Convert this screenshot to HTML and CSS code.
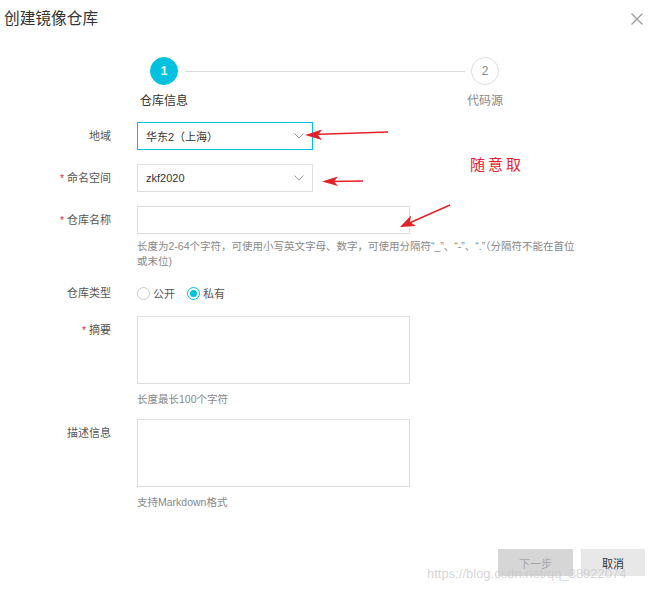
FILE: index.html
```html
<!DOCTYPE html>
<html>
<head>
    <title>创建镜像仓库</title>
    <meta charset="utf-8">
    <link rel="stylesheet" href="styles.css">
</head>
<body>

    <div class="dialog">
        <div class="dialog-header">
            <h1 class="dialog-title">创建镜像仓库</h1>
            <svg class="close" width="12" height="12" viewBox="0 0 12 12">
                <path d="M0.5 0.5 L11.5 11.5 M11.5 0.5 L0.5 11.5" stroke="#999" stroke-width="1.2" fill="none"/>
            </svg>
        </div>

        <!-- Wizard steps -->
        <div class="steps">
            <div class="step active">
                <div class="step-num">1</div>
                <div class="step-label">仓库信息</div>
            </div>
            <div class="step-line"></div>
            <div class="step">
                <div class="step-num">2</div>
                <div class="step-label">代码源</div>
            </div>
        </div>

        <div class="form">
            <div class="form-item">
                <label class="form-label">地域</label>
                <div class="form-control">
                    <div class="select focused">
                        <span>华东2（上海）</span>
                        <svg class="caret" width="10" height="6" viewBox="0 0 10 6"><path d="M0.5 0.5 L5 5 L9.5 0.5" stroke="#999" fill="none"/></svg>
                    </div>
                </div>
            </div>
            <div class="form-item">
                <label class="form-label"><i class="req">*</i>命名空间</label>
                <div class="form-control">
                    <div class="select">
                        <span>zkf2020</span>
                        <svg class="caret" width="10" height="6" viewBox="0 0 10 6"><path d="M0.5 0.5 L5 5 L9.5 0.5" stroke="#999" fill="none"/></svg>
                    </div>
                </div>
            </div>
            <div class="form-item name-item">
                <label class="form-label"><i class="req">*</i>仓库名称</label>
                <div class="form-control">
                    <div class="input"></div>
                    <p class="help">长度为2-64个字符，可使用小写英文字母、数字，可使用分隔符“_”、“-”、“.”（分隔符不能在首位或末位)</p>
                </div>
            </div>
            <div class="form-item radio-item">
                <label class="form-label">仓库类型</label>
                <div class="form-control radios">
                    <span class="radio"><i class="radio-dot"></i>公开</span>
                    <span class="radio checked"><i class="radio-dot"></i>私有</span>
                </div>
            </div>
            <div class="form-item area-item">
                <label class="form-label"><i class="req">*</i>摘要</label>
                <div class="form-control">
                    <div class="textarea"></div>
                    <p class="help">长度最长100个字符</p>
                </div>
            </div>
            <div class="form-item area-item">
                <label class="form-label">描述信息</label>
                <div class="form-control">
                    <div class="textarea"></div>
                    <p class="help">支持Markdown格式</p>
                </div>
            </div>
        </div>

        <div class="dialog-footer">
            <button class="btn disabled">下一步</button>
            <button class="btn">取消</button>
        </div>

        <!-- Annotations drawn on the screenshot -->
        <svg class="marks" width="650" height="591" viewBox="0 0 650 591">
            <g stroke="#e3212a" stroke-width="1.4" fill="#e3212a">
                <line x1="388" y1="132" x2="312" y2="134.5"/>
                <polygon points="305,135 322,129.5 318,135 322,140" stroke="none"/>
                <line x1="363" y1="181" x2="330" y2="181.5"/>
                <polygon points="322,181.5 338,176.5 334,181.5 338,186" stroke="none"/>
                <line x1="450" y1="205" x2="407" y2="224"/>
                <polygon points="400,227 411,215.5 410,222 416,226" stroke="none"/>
            </g>
        </svg>
        <div class="note">随意取</div>
        <div class="watermark">https://blog.csdn.net/qq_38922074</div>
    </div>

</body>
</html>
```

FILE: styles.css
```css
/* Page */
body, h1, p {
    margin: 0;
    padding: 0;
}

body {
    font-family: "Liberation Sans", "Noto Sans CJK SC", sans-serif;
    font-size: 11px;
    color: #333;
    background: #fff;
}

.dialog {
    position: relative;
    width: 650px;
    height: 591px;
    overflow: hidden;
    display: flex;
    flex-direction: column;
}

/* Header */
.dialog-header {
    display: flex;
    justify-content: space-between;
    align-items: flex-start;
    height: 40px;
    flex: none;
    padding: 8px 7px 0 4px;
    box-sizing: border-box;
}

.dialog-title {
    font-size: 15.7px;
    font-weight: normal;
    line-height: 22px;
    color: #333;
}

.close {
    margin-top: 5px;
}

/* Steps */
.steps {
    display: flex;
    align-items: flex-start;
    width: 381px;
    margin: 17px 0 0 134px;
}

.step {
    width: 60px;
    display: flex;
    flex-direction: column;
    align-items: center;
    position: relative;
    z-index: 1;
}

.step-num {
    width: 26px;
    height: 26px;
    border: 1px solid #ddd;
    border-radius: 50%;
    background: #fff;
    color: #888;
    font-size: 12px;
    line-height: 26px;
    text-align: center;
}

.step.active .step-num {
    background: #00c1de;
    border-color: #00c1de;
    color: #fff;
    font-weight: bold;
}

.step-label {
    margin-top: 8px;
    height: 16px;
    line-height: 16px;
    font-size: 12px;
    color: #888;
    white-space: nowrap;
}

.step.active .step-label {
    color: #333;
}

.step-line {
    flex: 1;
    height: 1px;
    background: #dcdcdc;
    margin: 14px -10px 0 -9px;
}

/* Form */
.form {
    margin-top: 13px;
}

.form-item {
    display: grid;
    grid-template-columns: 111px 1fr;
    column-gap: 26px;
    margin-bottom: 14px;
}

.form-label {
    text-align: right;
    height: 28px;
    line-height: 28px;
    color: #555;
    white-space: nowrap;
}

.req {
    font-style: normal;
    color: #e3212a;
    margin-right: 3px;
    font-size: 10px;
}

.select {
    width: 176px;
    height: 28px;
    box-sizing: border-box;
    border: 1px solid #ddd;
    display: flex;
    align-items: center;
    justify-content: space-between;
    padding: 0 8px 0 8px;
    color: #333;
}

.select.focused {
    border-color: #00c1de;
}

.input {
    width: 273px;
    height: 28px;
    box-sizing: border-box;
    border: 1px solid #ddd;
}

.help {
    width: 444px;
    margin-top: 5px;
    font-size: 10.5px;
    line-height: 15px;
    color: #888;
}

.name-item {
    margin-bottom: 10px;
}

/* Radios */
.radio-item {
    margin-bottom: 9px;
}

.radios {
    display: flex;
    align-items: center;
    height: 28px;
    gap: 12px;
    color: #555;
}

.radio {
    display: flex;
    align-items: center;
}

.radio-dot {
    width: 13px;
    height: 13px;
    box-sizing: border-box;
    border: 1px solid #ccc;
    border-radius: 50%;
    margin-right: 3px;
    position: relative;
}

.radio.checked .radio-dot {
    border-color: #00c1de;
}

.radio.checked .radio-dot::after {
    content: "";
    position: absolute;
    left: 2px;
    top: 2px;
    width: 7px;
    height: 7px;
    border-radius: 50%;
    background: #00c1de;
}

/* Text areas */
.textarea {
    width: 273px;
    height: 68px;
    box-sizing: border-box;
    border: 1px solid #ddd;
}

.area-item .help {
    margin-top: 8px;
}

.area-item {
    margin-bottom: 12px;
}

/* Footer */
.dialog-footer {
    display: flex;
    justify-content: flex-end;
    gap: 8px;
    margin-top: auto;
    padding: 0 5px 15px 0;
}

.btn {
    height: 27px;
    border: none;
    background: #e8e8e8;
    color: #333;
    font-family: inherit;
    font-size: 11px;
    padding: 0;
    width: 64px;
}

.btn.disabled {
    width: 75px;
    background: #d6d6d6;
    color: #a6a6a6;
}

/* Annotation overlay */
.marks {
    position: absolute;
    left: 0;
    top: 0;
    pointer-events: none;
}

.note {
    position: absolute;
    left: 470px;
    top: 153px;
    font-family: "Noto Sans CJK SC", sans-serif;
    font-size: 15px;
    letter-spacing: 3px;
    color: #e3212a;
}

.watermark {
    position: absolute;
    left: 427px;
    top: 566px;
    font-size: 13px;
    color: rgba(200, 200, 200, 0.75);
    white-space: nowrap;
}
```
